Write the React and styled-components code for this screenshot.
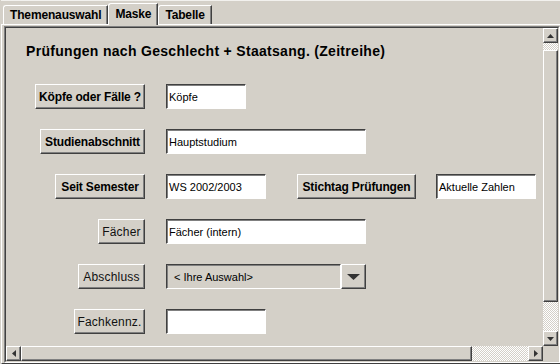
import React from "react";
import styled, { createGlobalStyle, css } from "styled-components";

const GlobalStyle = createGlobalStyle`
  html, body { margin: 0; padding: 0; background: #d4d0c8; }
  body { font-family: "Liberation Sans", Arial, sans-serif; }
  * { box-sizing: border-box; }
`;

const raised = css`
  background: #d4d0c8;
  border: 1px solid;
  border-color: #fff #404040 #404040 #fff;
  box-shadow: inset -1px -1px 0 #808080;
`;

const sunken = css`
  border: 1px solid;
  border-color: #404040 #fff #fff #404040;
  box-shadow: inset 1px 1px 0 #808080;
`;

const Window = styled.div`
  width: 560px;
  height: 364px;
  display: flex;
  flex-direction: column;
  padding-left: 1px;
  overflow: hidden;
  background: #d4d0c8;
`;

const TabStrip = styled.div`
  height: 24px;
  display: flex;
  align-items: flex-end;
  padding-left: 2px;
  border-top: 1px solid #f2f1ee;
  position: relative;
  z-index: 1;
`;

const Tab = styled.div`
  height: ${(p) => (p.$active ? 22 : 19)}px;
  margin-bottom: ${(p) => (p.$active ? -1 : 0)}px;
  padding: ${(p) => (p.$active ? "0 6px 2px" : "0 6px")};
  display: flex;
  align-items: center;
  font-size: 12px;
  font-weight: bold;
  letter-spacing: -0.15px;
  color: #000;
  background: #d4d0c8;
  border-top: 1px solid #fff;
  border-left: 1px solid #fff;
  border-right: 1px solid #404040;
  box-shadow: inset -1px 0 0 #808080;
  border-radius: 3px 0 0 0;
  white-space: nowrap;
`;

const Panel = styled.div`
  flex: 1;
  min-height: 0;
  display: flex;
  border-top: 1px solid #fff;
  border-left: 1px solid #fff;
  border-bottom: 1px solid #404040;
  padding: 1px 0 0 2px;
`;

const PaneFrame = styled.div`
  flex: 1;
  min-width: 0;
  display: flex;
  border: 1px solid;
  border-color: #808080 #fff #fff #808080;
`;

const PaneBody = styled.div`
  flex: 1;
  min-width: 0;
  display: grid;
  grid-template-columns: 1fr 15px;
  grid-template-rows: 1fr 15px;
  border: 1px solid;
  border-color: #404040 #d4d0c8 #d4d0c8 #404040;
`;

const Content = styled.div`
  overflow: hidden;
  padding-top: 15px;
`;

const Title = styled.h1`
  margin: 0 0 25px 20px;
  font-size: 14px;
  line-height: 16px;
  font-weight: bold;
  letter-spacing: 0.3px;
  color: #000;
  white-space: nowrap;
`;

const Form = styled.div`
  display: flex;
  flex-direction: column;
  gap: 20px;
`;

const Row = styled.div`
  display: flex;
  align-items: center;
  height: 25px;
`;

const LabelCell = styled.div`
  width: 139px;
  display: flex;
  justify-content: flex-end;
  margin-right: 21px;
`;

const Button = styled.div`
  ${raised};
  width: ${(p) => p.$w}px;
  height: 25px;
  margin-left: ${(p) => p.$ml || 0}px;
  margin-right: ${(p) => p.$mr || 0}px;
  display: flex;
  align-items: center;
  justify-content: center;
  font-size: 12px;
  font-weight: ${(p) => (p.$plain ? "normal" : "bold")};
  letter-spacing: ${(p) => (p.$plain ? "0.2px" : "-0.15px")};
  color: ${(p) => (p.$plain ? "#111" : "#000")};
  white-space: nowrap;
`;

const Field = styled.div`
  ${sunken};
  width: ${(p) => p.$w}px;
  height: 25px;
  background: #fff;
  display: flex;
  align-items: center;
  padding-left: 2px;
  font-size: 11px;
  color: #000;
  white-space: nowrap;
  overflow: hidden;
`;

const Combo = styled.div`
  display: flex;
  width: 200px;
  height: 25px;
`;

const ComboValue = styled.div`
  ${sunken};
  flex: 1;
  background: #d4d0c8;
  display: flex;
  align-items: center;
  padding-left: 7px;
  font-size: 11px;
  color: #000;
  white-space: nowrap;
`;

const ComboArrow = styled.div`
  ${raised};
  width: 25px;
  height: 25px;
  display: flex;
  align-items: center;
  justify-content: center;
`;

const checker = css`
  background-color: #d4d0c8;
  background-image: repeating-conic-gradient(#fff 0 25%, transparent 0 50%);
  background-size: 2px 2px;
`;

const VScroll = styled.div`
  display: flex;
  flex-direction: column;
  grid-column: 2;
  grid-row: 1;
`;

const HScroll = styled.div`
  display: flex;
  grid-column: 1;
  grid-row: 2;
`;

const Corner = styled.div`
  grid-column: 2;
  grid-row: 2;
  background: #d4d0c8;
`;

const Track = styled.div`
  ${checker};
  flex: 1;
  display: flex;
  flex-direction: ${(p) => (p.$vertical ? "column" : "row")};
  padding-top: ${(p) => p.$offset || 0}px;
  min-width: 0;
  min-height: 0;
`;

const Thumb = styled.div`
  ${raised};
  flex: none;
  width: ${(p) => (p.$vertical ? "15px" : `${p.$size}px`)};
  height: ${(p) => (p.$vertical ? `${p.$size}px` : "15px")};
`;

const ArrowBtn = styled.div`
  ${raised};
  width: 15px;
  height: 15px;
  flex: none;
  display: flex;
  align-items: center;
  justify-content: center;
`;

const Tri = ({ dir, w = 7, h = 4 }) => {
  const pts = {
    up: `0,${h} ${w / 2},0 ${w},${h}`,
    down: `0,0 ${w},0 ${w / 2},${h}`,
    left: `${h},0 ${h},${w} 0,${w / 2}`,
    right: `0,0 0,${w} ${h},${w / 2}`,
  }[dir];
  const vw = dir === "left" || dir === "right" ? h : w;
  const vh = dir === "left" || dir === "right" ? w : h;
  return (
    <svg width={vw} height={vh} viewBox={`0 0 ${vw} ${vh}`}>
      <polygon points={pts} fill="#333" />
    </svg>
  );
};

export default function App() {
  return (
    <>
      <GlobalStyle />
      <Window>
        <TabStrip>
          <Tab>Themenauswahl</Tab>
          <Tab $active>Maske</Tab>
          <Tab>Tabelle</Tab>
        </TabStrip>
        <Panel>
          <PaneFrame>
            <PaneBody>
              <Content>
                <Title>Prüfungen nach Geschlecht + Staatsang. (Zeitreihe)</Title>
                <Form>
                  <Row>
                    <LabelCell>
                      <Button $w={110}>Köpfe oder Fälle ?</Button>
                    </LabelCell>
                    <Field $w={80}>Köpfe</Field>
                  </Row>
                  <Row>
                    <LabelCell>
                      <Button $w={105}>Studienabschnitt</Button>
                    </LabelCell>
                    <Field $w={200}>Hauptstudium</Field>
                  </Row>
                  <Row>
                    <LabelCell>
                      <Button $w={90}>Seit Semester</Button>
                    </LabelCell>
                    <Field $w={100}>WS 2002/2003</Field>
                    <Button $w={119} $ml={31} $mr={20}>
                      Stichtag Prüfungen
                    </Button>
                    <Field $w={100}>Aktuelle Zahlen</Field>
                  </Row>
                  <Row>
                    <LabelCell>
                      <Button $w={47} $plain>
                        Fächer
                      </Button>
                    </LabelCell>
                    <Field $w={200}>Fächer (intern)</Field>
                  </Row>
                  <Row>
                    <LabelCell>
                      <Button $w={67} $plain>
                        Abschluss
                      </Button>
                    </LabelCell>
                    <Combo>
                      <ComboValue>&lt; Ihre Auswahl&gt;</ComboValue>
                      <ComboArrow>
                        <Tri dir="down" w={13} h={6} />
                      </ComboArrow>
                    </Combo>
                  </Row>
                  <Row>
                    <LabelCell>
                      <Button $w={71} $plain>
                        Fachkennz.
                      </Button>
                    </LabelCell>
                    <Field $w={100} />
                  </Row>
                </Form>
              </Content>
              <VScroll>
                <ArrowBtn>
                  <Tri dir="up" />
                </ArrowBtn>
                <Track $vertical $offset={7}>
                  <Thumb $vertical $size={252} />
                </Track>
                <ArrowBtn>
                  <Tri dir="down" />
                </ArrowBtn>
              </VScroll>
              <HScroll>
                <ArrowBtn>
                  <Tri dir="left" />
                </ArrowBtn>
                <Track>
                  <Thumb $size={451} />
                </Track>
                <ArrowBtn>
                  <Tri dir="right" />
                </ArrowBtn>
              </HScroll>
              <Corner />
            </PaneBody>
          </PaneFrame>
        </Panel>
      </Window>
    </>
  );
}
